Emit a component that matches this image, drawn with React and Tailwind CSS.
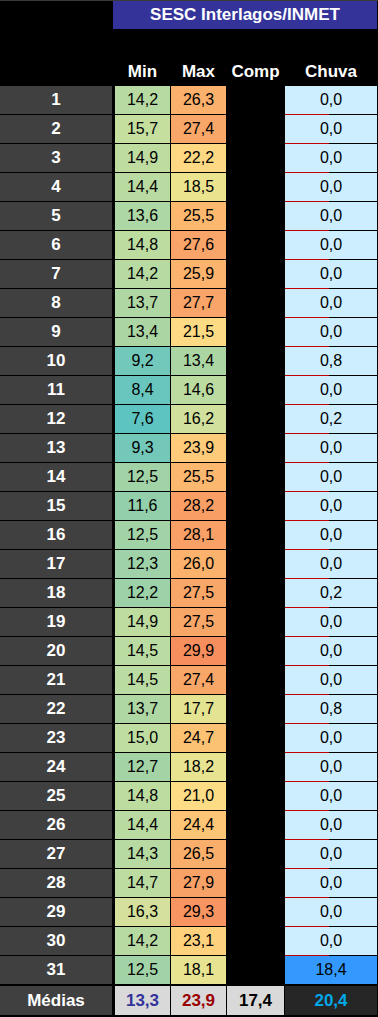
const DATA = [
  [1, 14.2, 26.3, 0.0],
  [2, 15.7, 27.4, 0.0],
  [3, 14.9, 22.2, 0.0],
  [4, 14.4, 18.5, 0.0],
  [5, 13.6, 25.5, 0.0],
  [6, 14.8, 27.6, 0.0],
  [7, 14.2, 25.9, 0.0],
  [8, 13.7, 27.7, 0.0],
  [9, 13.4, 21.5, 0.0],
  [10, 9.2, 13.4, 0.8],
  [11, 8.4, 14.6, 0.0],
  [12, 7.6, 16.2, 0.2],
  [13, 9.3, 23.9, 0.0],
  [14, 12.5, 25.5, 0.0],
  [15, 11.6, 28.2, 0.0],
  [16, 12.5, 28.1, 0.0],
  [17, 12.3, 26.0, 0.0],
  [18, 12.2, 27.5, 0.2],
  [19, 14.9, 27.5, 0.0],
  [20, 14.5, 29.9, 0.0],
  [21, 14.5, 27.4, 0.0],
  [22, 13.7, 17.7, 0.8],
  [23, 15.0, 24.7, 0.0],
  [24, 12.7, 18.2, 0.0],
  [25, 14.8, 21.0, 0.0],
  [26, 14.4, 24.4, 0.0],
  [27, 14.3, 26.5, 0.0],
  [28, 14.7, 27.9, 0.0],
  [29, 16.3, 29.3, 0.0],
  [30, 14.2, 23.1, 0.0],
  [31, 12.5, 18.1, 18.4],
];

// heat scale shared by min and max columns
const STOPS = [
  [7.6, [94, 196, 193]],
  [9.2, [114, 200, 187]],
  [11.6, [147, 207, 171]],
  [12.5, [162, 211, 167]],
  [13.5, [172, 214, 164]],
  [14.5, [186, 219, 161]],
  [15.7, [197, 223, 158]],
  [16.3, [212, 224, 155]],
  [17.7, [227, 227, 146]],
  [18.5, [235, 227, 142]],
  [21, [252, 221, 134]],
  [22.2, [254, 216, 130]],
  [24, [253, 202, 121]],
  [26, [251, 178, 108]],
  [27.5, [249, 166, 105]],
  [28.2, [249, 159, 102]],
  [30, [247, 141, 93]],
];

function heat(v) {
  if (v <= STOPS[0][0]) return `rgb(${STOPS[0][1].join(",")})`;
  for (let i = 1; i < STOPS.length; i++) {
    const [b, cb] = STOPS[i];
    const [a, ca] = STOPS[i - 1];
    if (v <= b) {
      const t = (v - a) / (b - a);
      const c = ca.map((x, k) => Math.round(x + (cb[k] - x) * t));
      return `rgb(${c.join(",")})`;
    }
  }
  return `rgb(${STOPS[STOPS.length - 1][1].join(",")})`;
}

const fmt = (v) => v.toFixed(1).replace(".", ",");

function Row({ day, min, max, rain, last }) {
  return (
    <div className="flex h-[29px]">
      <div className="w-[112px] h-[28px] bg-[#404040] flex items-center justify-center text-white font-bold text-[17px]">
        {day}
      </div>
      <div
        className="ml-[3px] w-[55px] h-[28px] flex items-center justify-center text-[16px] text-black"
        style={{ background: heat(min) }}
      >
        {fmt(min)}
      </div>
      <div
        className="ml-px w-[55px] h-[28px] flex items-center justify-center text-[16px] text-black"
        style={{ background: heat(max) }}
      >
        {fmt(max)}
      </div>
      <div className="ml-px w-[57px]" />
      <div className="ml-px w-[92px] flex flex-col">
        <div
          className={`h-[28px] flex items-center justify-center text-[16px] text-black ${
            rain > 10 ? "bg-[#3399ff]" : "bg-[#cceeff]"
          }`}
        >
          {fmt(rain)}
        </div>
        {!last && <div className="h-px w-[44px] bg-[#c00000]" />}
      </div>
    </div>
  );
}

export default function App() {
  return (
    <div
      className="w-[378px] h-[1017px] bg-black overflow-hidden"
      style={{ fontFamily: '"Liberation Sans", Arial, sans-serif' }}
    >
      <div className="h-px bg-[#3a3a3a]" />
      <div className="flex">
        <div className="ml-[113px] w-[264px] h-[28px] bg-[#333399] flex items-center justify-center text-white font-bold text-[17px]">
          SESC Interlagos/INMET
        </div>
      </div>
      <div className="flex h-[57px] items-end pb-[4px] text-white font-bold text-[17px] leading-[20px]">
        <div className="w-[112px]" />
        <div className="ml-[3px] w-[55px] text-center">Min</div>
        <div className="ml-px w-[55px] text-center">Max</div>
        <div className="ml-px w-[57px] text-center">Comp</div>
        <div className="ml-px w-[92px] text-center">Chuva</div>
      </div>
      {DATA.map(([day, min, max, rain], i) => (
        <Row key={day} day={day} min={min} max={max} rain={rain} last={i === DATA.length - 1} />
      ))}
      <div className="flex h-[29px] mt-px font-bold text-[17px]">
        <div className="w-[112px] h-[29px] bg-[#404040] flex items-center justify-center text-white">
          Médias
        </div>
        <div className="ml-[3px] w-[55px] h-[29px] bg-[#d9d9d9] flex items-center justify-center text-[#333399]">
          13,3
        </div>
        <div className="ml-px w-[55px] h-[29px] bg-[#d9d9d9] flex items-center justify-center text-[#990000]">
          23,9
        </div>
        <div className="ml-px w-[57px] h-[29px] bg-[#d9d9d9] flex items-center justify-center text-black">
          17,4
        </div>
        <div className="ml-px w-[92px] h-[29px] bg-[#262626] flex items-center justify-center text-[#00a8e8]">
          20,4
        </div>
      </div>
    </div>
  );
}
